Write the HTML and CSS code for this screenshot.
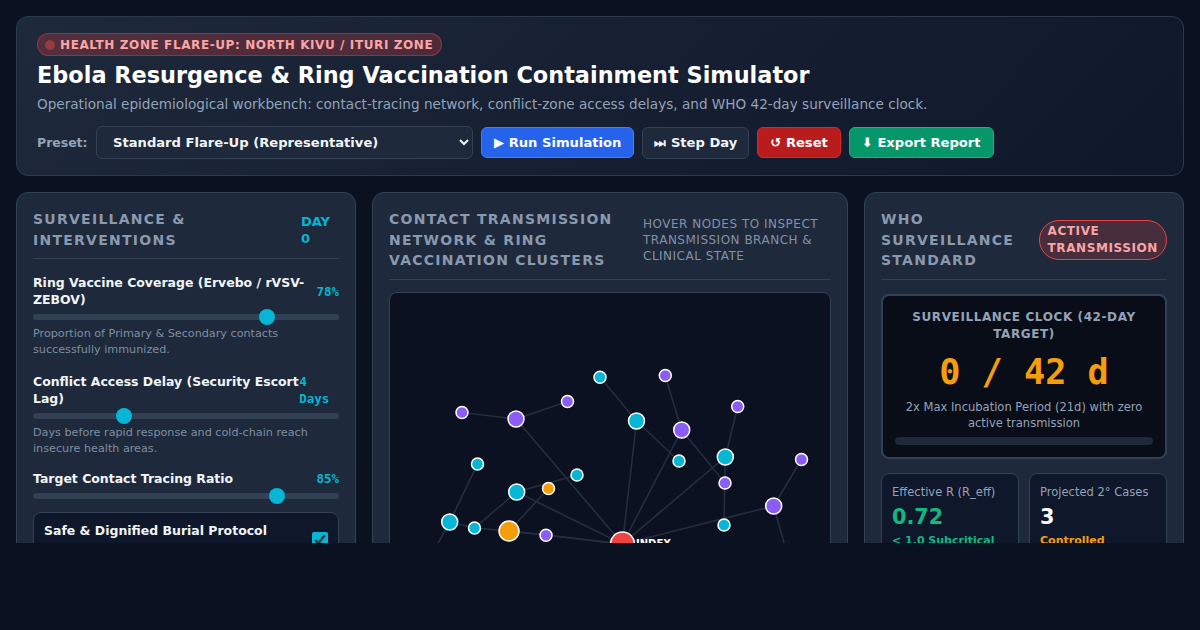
FILE: index.html
```html
<!DOCTYPE html>
<html lang="en">
<head>
<meta charset="utf-8">
<title>Ebola Ring Vaccination Simulator</title>
<link rel="stylesheet" href="styles.css">
</head>
<body>
<div class="app">
  <header class="hero">
    <div class="alert"><span class="alert-dot"></span>HEALTH ZONE FLARE-UP: NORTH KIVU / ITURI ZONE</div>
    <h1>Ebola Resurgence &amp; Ring Vaccination Containment Simulator</h1>
    <p class="sub">Operational epidemiological workbench: contact-tracing network, conflict-zone access delays, and WHO 42-day surveillance clock.</p>
    <div class="toolbar">
      <label class="preset" for="preset">Preset:</label>
      <select id="preset" class="select"><option>Standard Flare-Up (Representative)</option></select>
      <button class="btn btn-blue">▶ Run Simulation</button>
      <button class="btn btn-dark">⏭ Step Day</button>
      <button class="btn btn-red">↺ Reset</button>
      <button class="btn btn-green">⬇ Export Report</button>
    </div>
  </header>
  <main class="grid">
    <section class="card">
      <div class="card-head head-left">
        <h2>Surveillance &amp; Interventions</h2>
        <span class="day">DAY 0</span>
      </div>
      <div class="control">
        <div class="control-top"><span class="control-name">Ring Vaccine Coverage (Ervebo / rVSV-ZEBOV)</span><span class="control-val">78%</span></div>
        <input class="range" type="range" min="0" max="100" value="78">
        <p class="hint">Proportion of Primary &amp; Secondary contacts successfully immunized.</p>
      </div>
      <div class="control control-mid">
        <div class="control-top"><span class="control-name">Conflict Access Delay (Security Escort Lag)</span><span class="control-val">4 Days</span></div>
        <input class="range" type="range" min="0" max="14" value="4">
        <p class="hint">Days before rapid response and cold-chain reach insecure health areas.</p>
      </div>
      <div class="control control-last">
        <div class="control-top"><span class="control-name">Target Contact Tracing Ratio</span><span class="control-val">85%</span></div>
        <input class="range" type="range" min="20" max="100" value="85">
      </div>
      <div class="toggle">
        <div class="toggle-text"><strong>Safe &amp; Dignified Burial Protocol</strong><span>Reduces funeral-related spread</span></div>
        <input class="check" type="checkbox" checked>
      </div>
    </section>

    <section class="card">
      <div class="card-head head-net">
        <h2>Contact Transmission Network &amp; Ring Vaccination Clusters</h2>
        <span class="net-note">Hover nodes to inspect transmission branch &amp; clinical state</span>
      </div>
      <div class="canvas">
        <svg class="net" viewBox="390 293 440 380" width="440" height="380" aria-label="Transmission network">
          <g class="edges">
            <line x1="600" y1="377" x2="636.5" y2="421"/>
            <line x1="636.5" y1="421" x2="622.5" y2="544"/>
            <line x1="636.5" y1="421" x2="679" y2="461"/>
            <line x1="665" y1="375.5" x2="681.7" y2="430"/>
            <line x1="681.7" y1="430" x2="622.5" y2="544"/>
            <line x1="681.7" y1="430" x2="725" y2="483"/>
            <line x1="737.7" y1="406.5" x2="725.3" y2="457"/>
            <line x1="725.3" y1="457" x2="622.5" y2="544"/>
            <line x1="725.3" y1="457" x2="724" y2="525"/>
            <line x1="773.7" y1="506" x2="622.5" y2="544"/>
            <line x1="801.3" y1="459.5" x2="773.7" y2="506"/>
            <line x1="773.7" y1="506" x2="800" y2="600"/>
            <line x1="516" y1="419" x2="622.5" y2="544"/>
            <line x1="462" y1="412.5" x2="516" y2="419"/>
            <line x1="516" y1="419" x2="567.5" y2="401.5"/>
            <line x1="516.7" y1="492" x2="622.5" y2="544"/>
            <line x1="516.7" y1="492" x2="577" y2="475"/>
            <line x1="516.7" y1="492" x2="474.5" y2="528"/>
            <line x1="548.5" y1="488.5" x2="509" y2="531"/>
            <line x1="477.5" y1="464" x2="449.7" y2="522"/>
            <line x1="449.7" y1="522" x2="420" y2="576"/>
            <line x1="449.7" y1="522" x2="474.5" y2="528"/>
            <line x1="474.5" y1="528" x2="509" y2="531"/>
            <line x1="509" y1="531" x2="546" y2="535"/>
            <line x1="509" y1="531" x2="622.5" y2="544"/>
            <line x1="546" y1="535" x2="622.5" y2="544"/>
          </g>
          <g class="nodes">
            <circle class="n-cyan" cx="600" cy="377.3" r="6"/>
            <circle class="n-violet" cx="665.3" cy="375.5" r="6"/>
            <circle class="n-violet" cx="567.5" cy="401.5" r="6"/>
            <circle class="n-violet" cx="462" cy="412.5" r="6"/>
            <circle class="n-violet" cx="737.7" cy="406.5" r="6"/>
            <circle class="n-violet" cx="516" cy="419" r="8"/>
            <circle class="n-cyan" cx="636.5" cy="421" r="8"/>
            <circle class="n-violet" cx="681.7" cy="430" r="8"/>
            <circle class="n-cyan" cx="477.5" cy="464" r="6"/>
            <circle class="n-cyan" cx="679" cy="461" r="6"/>
            <circle class="n-cyan" cx="725.3" cy="457" r="8"/>
            <circle class="n-violet" cx="801.5" cy="459.5" r="6"/>
            <circle class="n-cyan" cx="577" cy="475" r="6"/>
            <circle class="n-violet" cx="725" cy="483" r="6"/>
            <circle class="n-orange" cx="548.5" cy="488.5" r="6"/>
            <circle class="n-cyan" cx="516.7" cy="492" r="8"/>
            <circle class="n-violet" cx="773.7" cy="506" r="8"/>
            <circle class="n-cyan" cx="449.7" cy="522" r="8"/>
            <circle class="n-cyan" cx="724" cy="525" r="6"/>
            <circle class="n-cyan" cx="474.5" cy="528" r="6"/>
            <circle class="n-orange" cx="509" cy="531" r="10"/>
            <circle class="n-violet" cx="546" cy="535.3" r="6"/>
            <circle class="n-red" cx="622.5" cy="544" r="12"/>
          </g>
          <text class="net-label" x="636" y="547">INDEX</text>
        </svg>
      </div>
    </section>

    <section class="card">
      <div class="card-head head-who">
        <h2>WHO Surveillance Standard</h2>
        <span class="status">Active Transmission</span>
      </div>
      <div class="clock">
        <div class="clock-title">Surveillance Clock (42-Day Target)</div>
        <div class="clock-value">0 / 42 d</div>
        <div class="clock-note">2x Max Incubation Period (21d) with zero active transmission</div>
        <div class="clock-bar"></div>
      </div>
      <div class="stats">
        <div class="stat">
          <div class="stat-label">Effective R (R_eff)</div>
          <div class="stat-value green">0.72</div>
          <div class="stat-note green">&lt; 1.0 Subcritical</div>
        </div>
        <div class="stat">
          <div class="stat-label">Projected 2° Cases</div>
          <div class="stat-value">3</div>
          <div class="stat-note amber">Controlled</div>
        </div>
      </div>
    </section>
  </main>
</div>
</body>
</html>
```
FILE: styles.css
```css
* { box-sizing: border-box; }
html, body { margin: 0; height: 100%; }
body {
  background: #0a1120;
  font-family: "DejaVu Sans", "Liberation Sans", sans-serif;
  color: #f1f5f9;
}
.app {
  padding: 16px 16px 0;
  height: 543px;
  display: flex;
  flex-direction: column;
  gap: 16px;
  overflow: hidden;
  background: #0a1120;
}
.hero {
  flex: none;
  height: 160px;
  padding: 16px 20px;
  border: 1px solid #2c3a4e;
  border-radius: 12px;
  background: linear-gradient(135deg, #1e293b 0%, #0f172a 100%);
}
.alert {
  display: inline-flex;
  align-items: center;
  gap: 5px;
  height: 23px;
  padding: 0 8px 0 7px;
  border: 1px solid rgba(239, 68, 68, 0.4);
  border-radius: 999px;
  background: rgba(239, 68, 68, 0.25);
  color: #fca5a5;
  font-size: 12px;
  font-weight: 700;
  letter-spacing: 0.6px;
}
.alert-dot {
  width: 10px;
  height: 10px;
  border-radius: 50%;
  background: #ef4444;
  opacity: 0.45;
}
h1 {
  margin: 4px 0 0;
  color: #fff;
  font-size: 22.4px;
  line-height: 30px;
  font-weight: 700;
}
.sub {
  margin: 5px 0 0;
  color: #94a3b8;
  font-size: 13.6px;
  line-height: 18px;
}
.toolbar {
  display: flex;
  align-items: center;
  gap: 8px;
  margin-top: 13px;
}
.preset { width: 51px; color: #94a3b8; font-size: 12.48px; font-weight: 700; white-space: nowrap; }
.select {
  width: 377px;
  height: 33px;
  padding: 0 12px;
  border: 1px solid #334155;
  border-radius: 6px;
  background: #1e293b;
  color: #f1f5f9;
  font: 700 13.12px "DejaVu Sans", sans-serif;
}
.btn {
  height: 31px;
  padding: 0 12px;
  border: 1px solid transparent;
  border-radius: 6px;
  color: #fff;
  font: 700 13.12px "DejaVu Sans", sans-serif;
}
.btn-blue { background: #2563eb; border-color: #3b82f6; }
.btn-dark { background: #1e293b; border-color: #334155; height: 32px; padding: 0 11px; color: #f1f5f9; }
.btn-red { background: #b91c1c; border-color: #dc2626; }
.btn-green { background: #059669; border-color: #10b981; }

.grid {
  flex: none;
  height: 700px;
  display: grid;
  grid-template-columns: 340px 1fr 320px;
  gap: 16px;
  align-items: start;
}
.card {
  height: 700px;
  padding: 16px;
  border: 1px solid #334155;
  border-radius: 12px;
  background: #1e293b;
}
.card-head {
  display: flex;
  align-items: center;
  justify-content: space-between;
  gap: 12px;
  padding-bottom: 8px;
  margin-bottom: 14px;
  border-bottom: 1px solid #334155;
}
.head-left { margin-bottom: 15px; }
h2 {
  margin: 0;
  color: #8a99ae;
  font-size: 14px;
  line-height: 20.5px;
  font-weight: 700;
  letter-spacing: 1.26px;
  text-transform: uppercase;
}
.day {
  flex: 0 0 38px;
  color: #06b6d4;
  font-size: 13px;
  line-height: 17px;
  font-weight: 700;
}
.control { margin-bottom: 16px; }
.control-mid { margin-bottom: 13px; }
.control-last { margin-bottom: 8px; }
.control-top {
  display: flex;
  align-items: center;
  justify-content: space-between;
}
.control-name {
  color: #f1f5f9;
  font-size: 12.48px;
  line-height: 17px;
  font-weight: 700;
}
.control-val {
  color: #06b6d4;
  font-family: "DejaVu Sans Mono", monospace;
  font-size: 12.48px;
  line-height: 17px;
  font-weight: 700;
}
.range {
  display: block;
  width: 100%;
  height: 16px;
  margin: 1px 0;
  background: transparent;
  appearance: none;
  -webkit-appearance: none;
}
.range::-webkit-slider-runnable-track {
  height: 6px;
  border-radius: 3px;
  background: #334155;
}
.range::-webkit-slider-thumb {
  -webkit-appearance: none;
  width: 16px;
  height: 16px;
  margin-top: -5px;
  border-radius: 50%;
  background: #06b6d4;
}
.hint {
  margin: 0;
  color: #7f8ea3;
  font-size: 11.2px;
  line-height: 15.68px;
}
.toggle {
  display: flex;
  align-items: center;
  justify-content: space-between;
  padding: 9px 10px;
  border: 1px solid #334155;
  border-radius: 8px;
  background: #0f172a;
}
.toggle-text { display: flex; flex-direction: column; gap: 2px; }
.toggle-text strong { font-size: 12.48px; line-height: 17px; color: #f1f5f9; }
.toggle-text span { font-size: 11px; line-height: 15px; color: #7f8ea3; }
.check {
  width: 16px;
  height: 16px;
  margin: 2px 0 0;
  accent-color: #06b6d4;
}
.head-net { margin-bottom: 12px; }
.head-net h2 { flex: 1 1 auto; }
.net-note {
  flex: 0 0 188px;
  color: #8492a6;
  font-size: 12px;
  line-height: 16px;
  letter-spacing: 0.5px;
  text-transform: uppercase;
}
.canvas {
  height: 420px;
  overflow: hidden;
  border: 1px solid #334155;
  border-radius: 8px;
  background: #0b1120;
}
.net { display: block; }
.edges line { stroke: #252e3d; stroke-width: 1.6; }
.nodes circle { stroke: #fff; stroke-width: 1.5; }
.n-cyan { fill: #06b6d4; }
.n-violet { fill: #8b5cf6; }
.n-orange { fill: #f59e0b; }
.n-red { fill: #ef4444; }
.net-label {
  fill: #fff;
  font: 700 10px "DejaVu Sans", sans-serif;
}
.head-who h2 { flex: 0 1 auto; }
.status {
  flex: 0 0 128px;
  padding: 2px 8px;
  border: 1px solid #ef4444;
  border-radius: 999px;
  background: rgba(239, 68, 68, 0.2);
  color: #fca5a5;
  font-size: 12px;
  line-height: 17px;
  font-weight: 700;
  letter-spacing: 0.6px;
  text-transform: uppercase;
}
.clock {
  padding: 13px 12px 12px;
  border: 2px solid #334155;
  border-radius: 8px;
  background: #090d18;
  text-align: center;
}
.clock-title {
  color: #94a3b8;
  font-size: 12px;
  line-height: 17px;
  font-weight: 700;
  letter-spacing: 0.6px;
  text-transform: uppercase;
}
.clock-value {
  margin: 8px 0 6px;
  color: #f59e0b;
  font-family: "DejaVu Sans Mono", monospace;
  font-size: 35.2px;
  line-height: 42px;
  font-weight: 700;
}
.clock-note {
  color: #94a3b8;
  font-size: 11.52px;
  line-height: 16px;
}
.clock-bar {
  height: 8px;
  margin-top: 6px;
  border-radius: 4px;
  background: #1e293b;
}
.stats {
  display: grid;
  grid-template-columns: 1fr 1fr;
  gap: 10px;
  margin-top: 14px;
}
.stat {
  padding: 10px;
  border: 1px solid #334155;
  border-radius: 8px;
  background: #0f172a;
}
.stat-label { color: #94a3b8; font-size: 11.52px; line-height: 17px; }
.stat-value { margin-top: 2px; color: #fff; font-size: 20.8px; line-height: 28px; font-weight: 700; }
.stat-note { margin-top: 2px; font-size: 11px; line-height: 15px; font-weight: 700; }
.green { color: #10b981; }
.amber { color: #f59e0b; }
```
